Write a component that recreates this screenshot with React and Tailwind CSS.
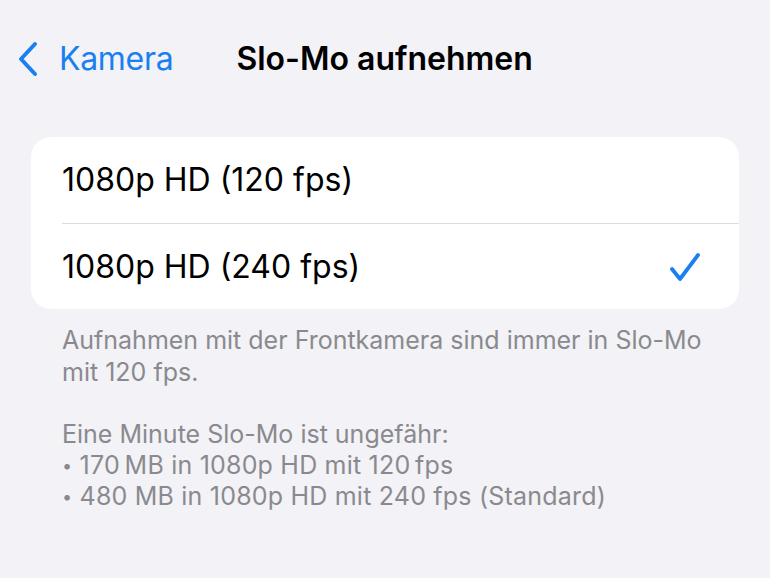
export default function App() {
  return (
    <div className="w-[770px] h-[578px] bg-[#f2f2f7] overflow-hidden" style={{ fontFamily: "Inter, 'Noto Sans', sans-serif" }}>
      <div className="flex items-center h-[38px] mt-[40px]">
        <div className="flex items-center pl-[17px]">
          <svg width="22" height="36" viewBox="0 0 22 36" className="shrink-0">
            <path d="M18 3 L4 18 L18 33" fill="none" stroke="#1a7ff0" strokeWidth="4" strokeLinecap="round" strokeLinejoin="round" />
          </svg>
          <span className="ml-[20px] text-[32px] leading-none text-[#1a7ff0] tracking-[-0.3px]">Kamera</span>
        </div>
        <span className="ml-[63px] text-[32px] leading-none font-semibold text-black">Slo-Mo aufnehmen</span>
      </div>
      <div className="mx-[31px] mt-[59px] bg-white rounded-[20px] overflow-hidden">
        <div className="pl-[31px] h-[86px] flex items-center">
          <span className="text-[32px] text-black">1080p HD (120 fps)</span>
        </div>
        <div className="ml-[31px] h-px bg-[#dcdce0]"></div>
        <div className="pl-[31px] pr-[38px] h-[85px] flex items-center justify-between">
          <span className="text-[32px] text-black">1080p HD (240 fps)</span>
          <svg width="32" height="32" viewBox="0 0 32 32">
            <path d="M3 18 L11 28 L29 4" fill="none" stroke="#1a7ff0" strokeWidth="3.8" strokeLinecap="round" strokeLinejoin="round" />
          </svg>
        </div>
      </div>
      <div className="pl-[62px] pr-[20px] mt-[15px] text-[25px] leading-[32px] text-[#8a8a8e]">
        <p>Aufnahmen mit der Frontkamera sind immer in Slo-Mo<br />mit 120 fps.</p>
        <p className="mt-[31px] leading-[31px]">
          Eine Minute Slo-Mo ist ungefähr:<br />
          <span className="tracking-[0.2px]"><span className="text-[18px] align-[2px]">•</span> 170{"\u2009"}MB in 1080p HD mit 120{"\u2009"}fps</span><br />
          <span className="tracking-[0.2px]"><span className="text-[18px] align-[2px]">•</span> 480 MB in 1080p HD mit 240 fps (Standard)</span>
        </p>
      </div>
    </div>
  );
}
